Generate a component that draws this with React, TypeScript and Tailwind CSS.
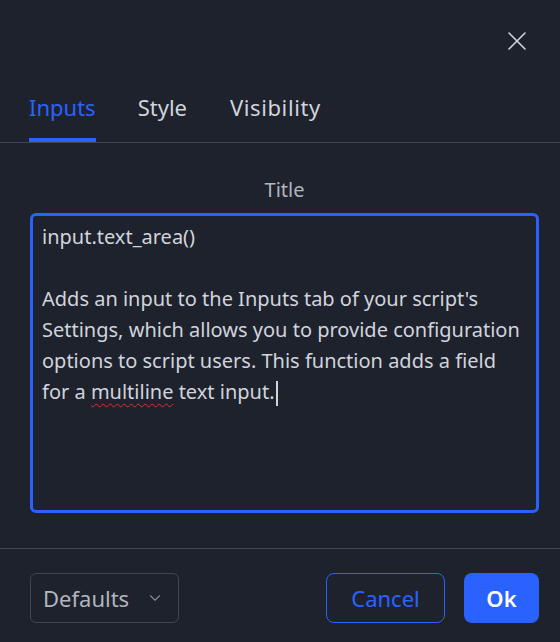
import { X, ChevronDown } from 'lucide-react';

const FONT = { fontFamily: '"Noto Sans", "Open Sans", sans-serif' };

export default function App() {
  const tabs = [
    { label: 'Inputs', cls: 'ml-0' },
    { label: 'Style', cls: 'ml-[42px]' },
    { label: 'Visibility', cls: 'ml-[43px] tracking-[0.6px]' },
  ];

  return (
    <div className="w-[560px] h-[642px] bg-[#1e222d] text-[#d1d4dc] flex flex-col overflow-hidden" style={FONT}>
      {/* ─── header ───────────────────────────────────────────── */}
      <div className="flex justify-end pt-[25px] pr-[27px] h-[84px]">
        <X size={32} strokeWidth={1.2} className="text-[#d1d4dc]" />
      </div>

      <div className="flex px-[29px] border-b border-[#434651] h-[59px]">
        {tabs.map((t, i) => (
          <div
            key={t.label}
            className={
              t.cls +
              ' flex flex-col justify-end text-[22px] leading-none ' +
              (i === 0 ? 'text-[#2962ff]' : 'text-[#d1d4dc]')
            }
          >
            <span className="pb-[20px]">{t.label}</span>
            <span className={i === 0 ? 'h-[4px] bg-[#2962ff]' : 'h-[4px]'} />
          </div>
        ))}
      </div>

      {/* ─── body ─────────────────────────────────────────────── */}
      <div className="flex flex-col pl-[30px] pr-[21px] pt-[34px] h-[406px] border-b border-[#434651]">
        <div className="text-center text-[20px] leading-[26px] text-[#b2b5be]">Title</div>
        <div className="mt-[10px] h-[300px] border-[3px] border-[#2962ff] rounded-[6px] px-[9px] pt-[5px] text-[20px] leading-[31px] text-[#d1d4dc] whitespace-nowrap">
          <div>input.text_area()</div>
          <div>&nbsp;</div>
          <div>Adds an input to the Inputs tab of your script's</div>
          <div>Settings, which allows you to provide configuration</div>
          <div>options to script users. This function adds a field</div>
          <div>
            for a{' '}
            <span className="underline decoration-wavy decoration-[#e0302b] decoration-1 underline-offset-[4px]">multiline</span>{' '}
            text input.
            <span className="inline-block w-[2px] h-[25px] bg-[#d1d4dc] align-middle ml-[1px]" />
          </div>
        </div>
      </div>

      {/* ─── footer ───────────────────────────────────────────── */}
      <div className="flex items-center justify-between pl-[30px] pr-[21px] pt-[24px]">
        <button className="flex items-center justify-between w-[149px] h-[50px] pl-[12px] pr-[14px] border border-[#434651] rounded-[6px] text-[22px] text-[#b2b5be]">
          Defaults
          <ChevronDown size={18} strokeWidth={1.5} className="text-[#868993]" />
        </button>
        <div className="flex gap-[19px]">
          <button className="w-[119px] h-[50px] border border-[#2962ff] rounded-[8px] text-[22px] text-[#2962ff]">
            Cancel
          </button>
          <button className="w-[75px] h-[50px] bg-[#2962ff] rounded-[8px] text-[22px] font-semibold text-white">
            Ok
          </button>
        </div>
      </div>
    </div>
  );
}
